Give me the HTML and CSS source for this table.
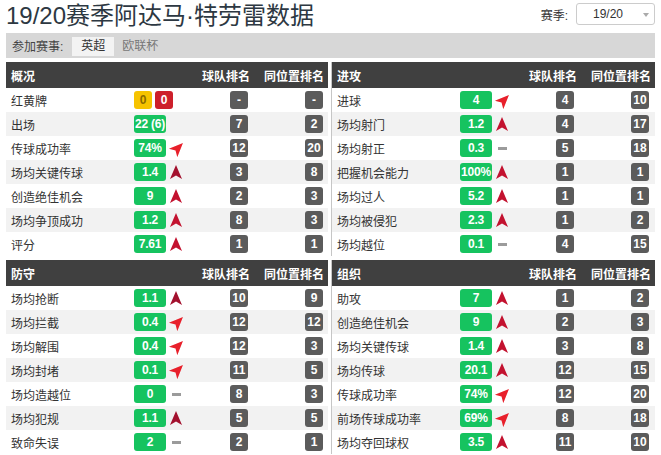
FILE: index.html
```html
<!DOCTYPE html>
<html lang="zh">
<head>
<meta charset="utf-8">
<title>19/20赛季阿达马·特劳雷数据</title>
<link rel="stylesheet" href="styles.css">
</head>
<body>
<div class="page">
  <div class="top">
    <h1 class="title">19/20赛季阿达马·特劳雷数据</h1>
    <div class="season"><span class="season-label">赛季:</span><div class="select">19/20<span class="caret"></span></div></div>
  </div>
  <div class="tabs"><span class="tabs-label">参加赛事:</span><span class="tab active">英超</span><span class="tab">欧联杯</span></div>
  <div class="grid">
    <section class="panel">
      <div class="head"><span class="t">概况</span><span class="c1">球队排名</span><span class="c2">同位置排名</span></div>
      <div class="rows">
        <div class="row"><span class="label">红黄牌</span><span class="cards"><span class="yc">0</span><span class="rc">0</span></span><span class="trend"></span><span class="rk">-</span><span class="rk pos">-</span></div>
        <div class="row"><span class="label">出场</span><span class="val">22 (6)</span><span class="trend"></span><span class="rk">7</span><span class="rk pos">2</span></div>
        <div class="row"><span class="label">传球成功率</span><span class="val">74%</span><span class="trend"><svg class="ar tilt" viewBox="0 0 12 14"><path d="M6 0L12 14L6 10.5L0 14Z"/></svg></span><span class="rk">12</span><span class="rk pos">20</span></div>
        <div class="row"><span class="label">场均关键传球</span><span class="val">1.4</span><span class="trend"><svg class="ar up dk" viewBox="0 0 12 14"><path d="M6 0L12 14L6 10.5L0 14Z"/></svg></span><span class="rk">3</span><span class="rk pos">8</span></div>
        <div class="row"><span class="label">创造绝佳机会</span><span class="val">9</span><span class="trend"><svg class="ar up" viewBox="0 0 12 14"><path d="M6 0L12 14L6 10.5L0 14Z"/></svg></span><span class="rk">2</span><span class="rk pos">3</span></div>
        <div class="row"><span class="label">场均争顶成功</span><span class="val">1.2</span><span class="trend"><svg class="ar up" viewBox="0 0 12 14"><path d="M6 0L12 14L6 10.5L0 14Z"/></svg></span><span class="rk">8</span><span class="rk pos">3</span></div>
        <div class="row"><span class="label">评分</span><span class="val">7.61</span><span class="trend"><svg class="ar up" viewBox="0 0 12 14"><path d="M6 0L12 14L6 10.5L0 14Z"/></svg></span><span class="rk">1</span><span class="rk pos">1</span></div>
      </div>
    </section>
    <section class="panel r">
      <div class="head"><span class="t">进攻</span><span class="c1">球队排名</span><span class="c2">同位置排名</span></div>
      <div class="rows">
        <div class="row"><span class="label">进球</span><span class="val">4</span><span class="trend"><svg class="ar tilt" viewBox="0 0 12 14"><path d="M6 0L12 14L6 10.5L0 14Z"/></svg></span><span class="rk">4</span><span class="rk pos">10</span></div>
        <div class="row"><span class="label">场均射门</span><span class="val">1.2</span><span class="trend"><svg class="ar up" viewBox="0 0 12 14"><path d="M6 0L12 14L6 10.5L0 14Z"/></svg></span><span class="rk">4</span><span class="rk pos">17</span></div>
        <div class="row"><span class="label">场均射正</span><span class="val">0.3</span><span class="trend"><span class="dash"></span></span><span class="rk">5</span><span class="rk pos">18</span></div>
        <div class="row"><span class="label">把握机会能力</span><span class="val">100%</span><span class="trend"><svg class="ar up" viewBox="0 0 12 14"><path d="M6 0L12 14L6 10.5L0 14Z"/></svg></span><span class="rk">1</span><span class="rk pos">1</span></div>
        <div class="row"><span class="label">场均过人</span><span class="val">5.2</span><span class="trend"><svg class="ar up" viewBox="0 0 12 14"><path d="M6 0L12 14L6 10.5L0 14Z"/></svg></span><span class="rk">1</span><span class="rk pos">1</span></div>
        <div class="row"><span class="label">场均被侵犯</span><span class="val">2.3</span><span class="trend"><svg class="ar up" viewBox="0 0 12 14"><path d="M6 0L12 14L6 10.5L0 14Z"/></svg></span><span class="rk">1</span><span class="rk pos">2</span></div>
        <div class="row"><span class="label">场均越位</span><span class="val">0.1</span><span class="trend"><span class="dash"></span></span><span class="rk">4</span><span class="rk pos">15</span></div>
      </div>
    </section>
    <section class="panel">
      <div class="head"><span class="t">防守</span><span class="c1">球队排名</span><span class="c2">同位置排名</span></div>
      <div class="rows">
        <div class="row"><span class="label">场均抢断</span><span class="val">1.1</span><span class="trend"><svg class="ar up dk" viewBox="0 0 12 14"><path d="M6 0L12 14L6 10.5L0 14Z"/></svg></span><span class="rk">10</span><span class="rk pos">9</span></div>
        <div class="row"><span class="label">场均拦截</span><span class="val">0.4</span><span class="trend"><svg class="ar tilt" viewBox="0 0 12 14"><path d="M6 0L12 14L6 10.5L0 14Z"/></svg></span><span class="rk">12</span><span class="rk pos">12</span></div>
        <div class="row"><span class="label">场均解围</span><span class="val">0.4</span><span class="trend"><svg class="ar tilt" viewBox="0 0 12 14"><path d="M6 0L12 14L6 10.5L0 14Z"/></svg></span><span class="rk">12</span><span class="rk pos">3</span></div>
        <div class="row"><span class="label">场均封堵</span><span class="val">0.1</span><span class="trend"><svg class="ar tilt" viewBox="0 0 12 14"><path d="M6 0L12 14L6 10.5L0 14Z"/></svg></span><span class="rk">11</span><span class="rk pos">5</span></div>
        <div class="row"><span class="label">场均造越位</span><span class="val">0</span><span class="trend"><span class="dash"></span></span><span class="rk">8</span><span class="rk pos">3</span></div>
        <div class="row"><span class="label">场均犯规</span><span class="val">1.1</span><span class="trend"><svg class="ar up dk" viewBox="0 0 12 14"><path d="M6 0L12 14L6 10.5L0 14Z"/></svg></span><span class="rk">5</span><span class="rk pos">5</span></div>
        <div class="row"><span class="label">致命失误</span><span class="val">2</span><span class="trend"><span class="dash"></span></span><span class="rk">2</span><span class="rk pos">1</span></div>
      </div>
    </section>
    <section class="panel r">
      <div class="head"><span class="t">组织</span><span class="c1">球队排名</span><span class="c2">同位置排名</span></div>
      <div class="rows">
        <div class="row"><span class="label">助攻</span><span class="val">7</span><span class="trend"><svg class="ar up" viewBox="0 0 12 14"><path d="M6 0L12 14L6 10.5L0 14Z"/></svg></span><span class="rk">1</span><span class="rk pos">2</span></div>
        <div class="row"><span class="label">创造绝佳机会</span><span class="val">9</span><span class="trend"><svg class="ar up" viewBox="0 0 12 14"><path d="M6 0L12 14L6 10.5L0 14Z"/></svg></span><span class="rk">2</span><span class="rk pos">3</span></div>
        <div class="row"><span class="label">场均关键传球</span><span class="val">1.4</span><span class="trend"><svg class="ar up" viewBox="0 0 12 14"><path d="M6 0L12 14L6 10.5L0 14Z"/></svg></span><span class="rk">3</span><span class="rk pos">8</span></div>
        <div class="row"><span class="label">场均传球</span><span class="val">20.1</span><span class="trend"><svg class="ar up" viewBox="0 0 12 14"><path d="M6 0L12 14L6 10.5L0 14Z"/></svg></span><span class="rk">12</span><span class="rk pos">15</span></div>
        <div class="row"><span class="label">传球成功率</span><span class="val">74%</span><span class="trend"><svg class="ar tilt" viewBox="0 0 12 14"><path d="M6 0L12 14L6 10.5L0 14Z"/></svg></span><span class="rk">12</span><span class="rk pos">20</span></div>
        <div class="row"><span class="label">前场传球成功率</span><span class="val">69%</span><span class="trend"><svg class="ar tilt" viewBox="0 0 12 14"><path d="M6 0L12 14L6 10.5L0 14Z"/></svg></span><span class="rk">8</span><span class="rk pos">18</span></div>
        <div class="row"><span class="label">场均夺回球权</span><span class="val">3.5</span><span class="trend"><svg class="ar up" viewBox="0 0 12 14"><path d="M6 0L12 14L6 10.5L0 14Z"/></svg></span><span class="rk">11</span><span class="rk pos">10</span></div>
      </div>
    </section>
  </div>
</div>
</body>
</html>
```

FILE: styles.css
```css
html, body {
  margin: 0;
  padding: 0;
  background: #fff;
}
body {
  font-family: "Liberation Sans", Arial, "Noto Sans CJK SC", sans-serif;
  color: #333;
  font-size: 12px;
}
.page {
  padding: 0 6px;
}
.top {
  display: flex;
  align-items: center;
  justify-content: space-between;
  height: 33px;
}
.title {
  margin: 0;
  font-size: 24px;
  font-weight: normal;
  line-height: 30px;
  color: #2d3842;
  margin-top: -2px;
}
.season {
  display: flex;
  align-items: center;
  gap: 8px;
  font-size: 12px;
  color: #333;
  margin-top: -5px;
}
.select {
  position: relative;
  width: 79px;
  height: 22px;
  box-sizing: border-box;
  border: 1px solid #ccc;
  border-radius: 3px;
  padding-left: 16px;
  line-height: 20px;
  font-size: 12px;
  color: #333;
}
.caret {
  position: absolute;
  right: 5px;
  top: 9px;
  width: 0;
  height: 0;
  border-left: 3px solid transparent;
  border-right: 3px solid transparent;
  border-top: 4px solid #aaa;
}
.tabs {
  display: flex;
  align-items: center;
  height: 25px;
  background: #d7d7d7;
  padding-left: 6px;
  margin-bottom: 4px;
  font-size: 12px;
}
.tabs-label {
  color: #444;
  margin-right: 9px;
}
.tab {
  height: 19px;
  line-height: 19px;
  padding: 0 8px;
  color: #777;
  margin-top: 2px;
}
.tab.active {
  background: #f3f3f3;
  color: #333;
  padding: 0 9px;
}
.grid {
  display: grid;
  grid-template-columns: 322px 324px;
  column-gap: 3px;
  row-gap: 4px;
}
.panel.r {
  border-left: 1px solid #c6c6c6;
}
.head {
  display: flex;
  align-items: center;
  height: 26px;
  background: #404040;
  color: #fff;
  font-weight: bold;
  font-size: 12px;
  padding: 0 4px 0 5px;
}
.head .t {
  flex: 1;
}
.head .c1 {
  margin-right: 14px;
}
.rows .row:nth-child(even) {
  background: #f2f2f2;
}
.row {
  display: grid;
  grid-template-columns: 123px 32px 64px 18px 75px;
  align-items: center;
  height: 24px;
  padding-left: 5px;
}
.label {
  font-size: 12px;
  color: #333;
  white-space: nowrap;
}
.val, .yc, .rc, .rk {
  height: 18px;
  line-height: 18px;
  border-radius: 3px;
  text-align: center;
  font-weight: bold;
  font-size: 12px;
  color: #fff;
  box-sizing: border-box;
}
.val {
  width: 32px;
  background: #16c35f;
  white-space: nowrap;
  letter-spacing: -0.2px;
}
.cards {
  display: flex;
  gap: 3px;
  width: 32px;
  overflow: visible;
}
.yc, .rc {
  flex: 0 0 18px;
  width: 18px;
}
.yc {
  background: #f6c300;
  color: #8a6a00;
}
.rc {
  background: #cd1f2b;
}
.trend {
  display: flex;
  align-items: center;
  padding-left: 4px;
  height: 18px;
}
.ar {
  width: 12px;
  height: 14px;
  display: block;
}
.ar.up {
  fill: #c3122f;
}
.ar.up.dk {
  fill: #a3112e;
}
.ar.tilt {
  fill: #e8202b;
  transform: rotate(45deg);
  margin-left: 2px;
}
.dash {
  display: block;
  width: 9px;
  height: 3px;
  background: #9b9b9b;
  margin-left: 2px;
}
.rk {
  min-width: 18px;
  padding: 0 2px;
  background: #5b5b5b;
  justify-self: start;
}
.rk.pos {
  justify-self: end;
}
```
